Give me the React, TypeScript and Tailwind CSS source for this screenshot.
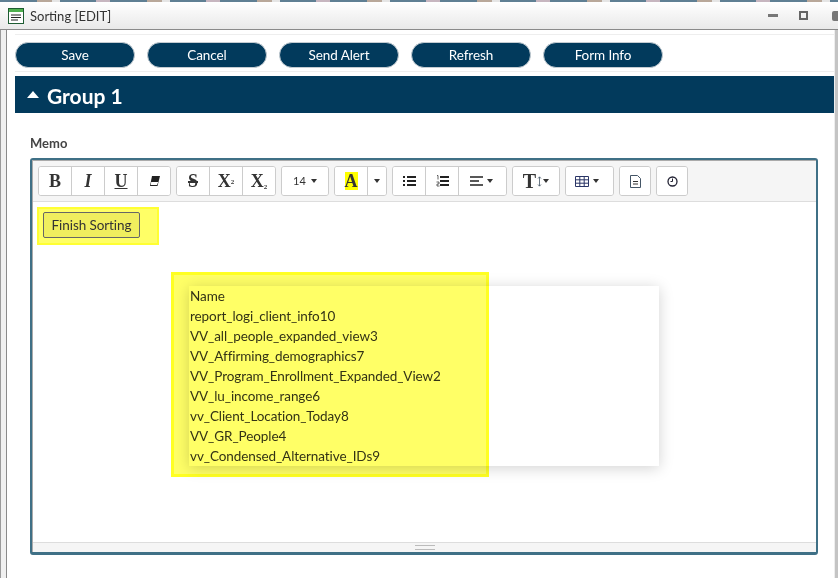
const font = "[font-family:'Lato',sans-serif]";

const actions = ["Save", "Cancel", "Send Alert", "Refresh", "Form Info"];

const rows = [
  "Name",
  "report_logi_client_info10",
  "VV_all_people_expanded_view3",
  "VV_Affirming_demographics7",
  "VV_Program_Enrollment_Expanded_View2",
  "VV_lu_income_range6",
  "vv_Client_Location_Today8",
  "VV_GR_People4",
  "vv_Condensed_Alternative_IDs9",
];

function Caret() {
  return (
    <svg width="6" height="4" viewBox="0 0 6 4" className="shrink-0">
      <path d="M0 0h6L3 4z" fill="#333" />
    </svg>
  );
}

function Glyph({ children, className = "" }: { children: React.ReactNode; className?: string }) {
  return (
    <span className={`font-['Liberation_Serif',serif] font-bold leading-none text-[#333] ${className}`}>
      {children}
    </span>
  );
}

function Tool({ w = "w-[33px]", children, last = false }: { w?: string; children: React.ReactNode; last?: boolean }) {
  return (
    <div className={`flex h-full items-center justify-center gap-1 bg-white ${w} ${last ? "" : "border-r border-[#ccc]"}`}>
      {children}
    </div>
  );
}

function Group({ children }: { children: React.ReactNode }) {
  return <div className="flex h-[30px] overflow-hidden rounded-[3px] border border-[#ccc] bg-white">{children}</div>;
}

export default function App() {
  return (
    <div className={`relative flex h-[578px] w-[838px] flex-col overflow-hidden bg-white ${font}`}>
      {/* Title bar */}
      <div className="h-[2px] bg-[repeating-linear-gradient(90deg,#5f7f93_0_37px,#b9a89a_37px_52px,#e5e5e5_52px_60px,#5f7f93_60px_96px,#c7b6c0_96px_110px)]" />
      <div className="flex h-[28px] items-center border-b border-[#8a8a8a] bg-gradient-to-b from-white to-[#e9e9e9] pl-2">
        <svg width="16" height="16" viewBox="0 0 16 16">
          <rect x="0.5" y="0.5" width="15" height="15" fill="#fff" stroke="#1d5c32" />
          <rect x="1" y="1" width="14" height="3" fill="#4fb04f" />
          <path d="M3 7h10M3 9.5h10M3 12h7" stroke="#222" />
        </svg>
        <span className="ml-[6px] pt-[3px] text-[13px] text-[#333]">Sorting [EDIT]</span>
        <div className="ml-auto flex items-center">
          <div className="h-[3px] w-[10px] bg-[#777]" />
          <div className="ml-[21px] h-[9px] w-[9px] border-2 border-[#666]" />
          <div className="ml-[24px] h-[10px] w-[6px] rounded-l-[2px] bg-[#777]" />
        </div>
      </div>

      <div className="flex min-h-0 flex-1">
        {/* Window edge */}
        <div className="w-[7px] shrink-0 border-x border-r-[#8a8a8a] border-l-[#9a9a9a] bg-[#f0f0f0]" />

        <div className="flex min-w-0 flex-1 flex-col pl-2">
          <div className="mt-[4px] flex gap-3 border-y border-[#eee] pt-[7px] pb-[3px]">
            {actions.map((label) => (
              <button
                key={label}
                className="h-[26px] w-[120px] rounded-full border border-[#c4ccd2] bg-[#023a5c] pt-px text-[13.5px] leading-none tracking-[-0.08px] text-white"
              >
                {label}
              </button>
            ))}
          </div>

          <div className="mt-[4px] flex h-[37px] items-center bg-[#023a5c] pl-3 text-white">
            <svg width="12" height="7" viewBox="0 0 12 7">
              <path d="M6 0l6 7H0z" fill="#fff" />
            </svg>
            <span className="ml-2 pt-px text-[21px] font-bold leading-none">Group 1</span>
          </div>

          <div className="mt-[22px] ml-[15px] text-[13px] font-bold leading-[16px] text-[#444]">Memo</div>

          {/* Editor */}
          <div className="mt-[7px] ml-[15px] flex h-[397px] w-[788px] flex-col rounded-[3px] border-2 border-b-[3px] border-[#3f7086]">
            <div className="flex flex-1 flex-col border-t border-l border-[#aaa]">
              <div className="flex h-[41px] shrink-0 items-center gap-[5px] border-b border-[#ddd] bg-[#f5f5f5] pl-[5px]">
                <Group>
                  <Tool><Glyph className="text-[18px]">B</Glyph></Tool>
                  <Tool><Glyph className="text-[18px] italic">I</Glyph></Tool>
                  <Tool><Glyph className="text-[18px] underline">U</Glyph></Tool>
                  <Tool w="w-[32px]" last>
                    <svg width="11" height="10" viewBox="0 0 11 10">
                      <path d="M3 0h8L8.5 10H1z" fill="#222" />
                      <path d="M2.2 6h7L8 9H1.8z" fill="#fff" />
                    </svg>
                  </Tool>
                </Group>
                <Group>
                  <Tool><Glyph className="text-[18px] line-through decoration-[1.5px]">S</Glyph></Tool>
                  <Tool>
                    <Glyph className="text-[18px]">X<sup className="text-[7px]">2</sup></Glyph>
                  </Tool>
                  <Tool w="w-[32px]" last>
                    <Glyph className="text-[18px]">X<sub className="text-[7px]">2</sub></Glyph>
                  </Tool>
                </Group>
                <Group>
                  <Tool w="w-[46px]" last>
                    <span className="pr-px text-[11px] text-[#333]">14</span>
                    <Caret />
                  </Tool>
                </Group>
                <Group>
                  <Tool>
                    <Glyph className="bg-[#ffff00] text-[18px]">A</Glyph>
                  </Tool>
                  <Tool w="w-[18px]" last><Caret /></Tool>
                </Group>
                <Group>
                  <Tool>
                    <svg width="13" height="10" viewBox="0 0 13 10">
                      <path d="M0 1h2M4 1h9M0 5h2M4 5h9M0 9h2M4 9h9" stroke="#222" strokeWidth="2" />
                    </svg>
                  </Tool>
                  <Tool>
                    <svg width="13" height="12" viewBox="0 0 13 12">
                      <path d="M4 2h9M4 6h9M4 10h9" stroke="#222" strokeWidth="2" />
                      <path d="M1 0.5h1v4M0.5 7h2.5v2H1v2h2.5" stroke="#222" strokeWidth="0.7" fill="none" />
                    </svg>
                  </Tool>
                  <Tool w="w-[47px]" last>
                    <svg width="13" height="10" viewBox="0 0 13 10" className="-ml-[3px]">
                      <path d="M0 1h13M0 5h9M0 9h13" stroke="#222" strokeWidth="1.6" />
                    </svg>
                    <Caret />
                  </Tool>
                </Group>
                <Group>
                  <Tool w="w-[46px]" last>
                    <span className="flex items-center gap-[1px]">
                      <Glyph className="text-[20px]">T</Glyph>
                      <svg width="5" height="11" viewBox="0 0 5 11">
                        <path d="M2.5 1v9M1 2.5L2.5 0.8 4 2.5M1 8.5l1.500 1.700L4 8.500" stroke="#456" fill="none" strokeWidth="0.8" />
                      </svg>
                      <Caret />
                    </span>
                  </Tool>
                </Group>
                <Group>
                  <Tool w="w-[47px]" last>
                    <svg width="14" height="11" viewBox="0 0 14 11" className="-ml-[6px]">
                      <path d="M.5.5h13v10H.5zM.5 3.800h13M.5 7.200h13M4.800.5v10M9.200.5v10" stroke="#2a3566" fill="none" />
                    </svg>
                    <Caret />
                  </Tool>
                </Group>
                <Group>
                  <Tool w="w-[30px]" last>
                    <svg width="11" height="13" viewBox="0 0 11 13">
                      <path d="M.5.5h7l3 3v9H.5z" fill="#fff" stroke="#456" />
                      <path d="M3 6.500h5M3 9h5" stroke="#333" />
                    </svg>
                  </Tool>
                </Group>
                <Group>
                  <Tool w="w-[30px]" last>
                    <svg width="11" height="11" viewBox="0 0 11 11">
                      <circle cx="5.500" cy="5.500" r="4.500" fill="none" stroke="#223" strokeWidth="1.300" />
                      <path d="M5.500 2.500v3h-2" fill="none" stroke="#223" />
                    </svg>
                  </Tool>
                </Group>
              </div>

              {/* Content */}
              <div className="relative flex-1 bg-white">
                <div className="mt-[5px] ml-[4px] w-[122px] border-2 border-[#ffff33] bg-[#ffff66] pt-[3px] pb-[5px] pl-[4px]">
                  <div className="flex h-[26px] w-[97px] items-center justify-center rounded-[2px] border border-[#666] bg-[#f0ee5e] text-[13.5px] tracking-[-0.08px] text-[#333]">
                    Finish Sorting
                  </div>
                </div>
                <div className="mt-[41px] ml-[156px] w-[470px] bg-white pl-px shadow-[0_2px_14px_rgba(0,0,0,0.18)]">
                  {rows.map((row) => (
                    <div key={row} className="h-[20px] text-[13.5px] leading-[20px] tracking-[-0.08px] text-[#333]">
                      {row}
                    </div>
                  ))}
                </div>
                {/* Highlight over the table */}
                <div className="absolute top-[70px] left-[138px] h-[205px] w-[318px] border-[3px] border-[#ffff22] bg-[#ffff66] mix-blend-multiply" />
              </div>

              <div className="flex h-[10px] shrink-0 items-center justify-center border-t border-[#ddd] bg-[#f5f5f5]">
                <div className="h-[5px] w-[20px] border-y border-[#bbb]" />
              </div>
            </div>
          </div>
        </div>

        {/* Scrollbar edge */}
        <div className="w-[4px] shrink-0 border-l border-[#eee] bg-[#c4c4c4]" />
      </div>
    </div>
  );
}
